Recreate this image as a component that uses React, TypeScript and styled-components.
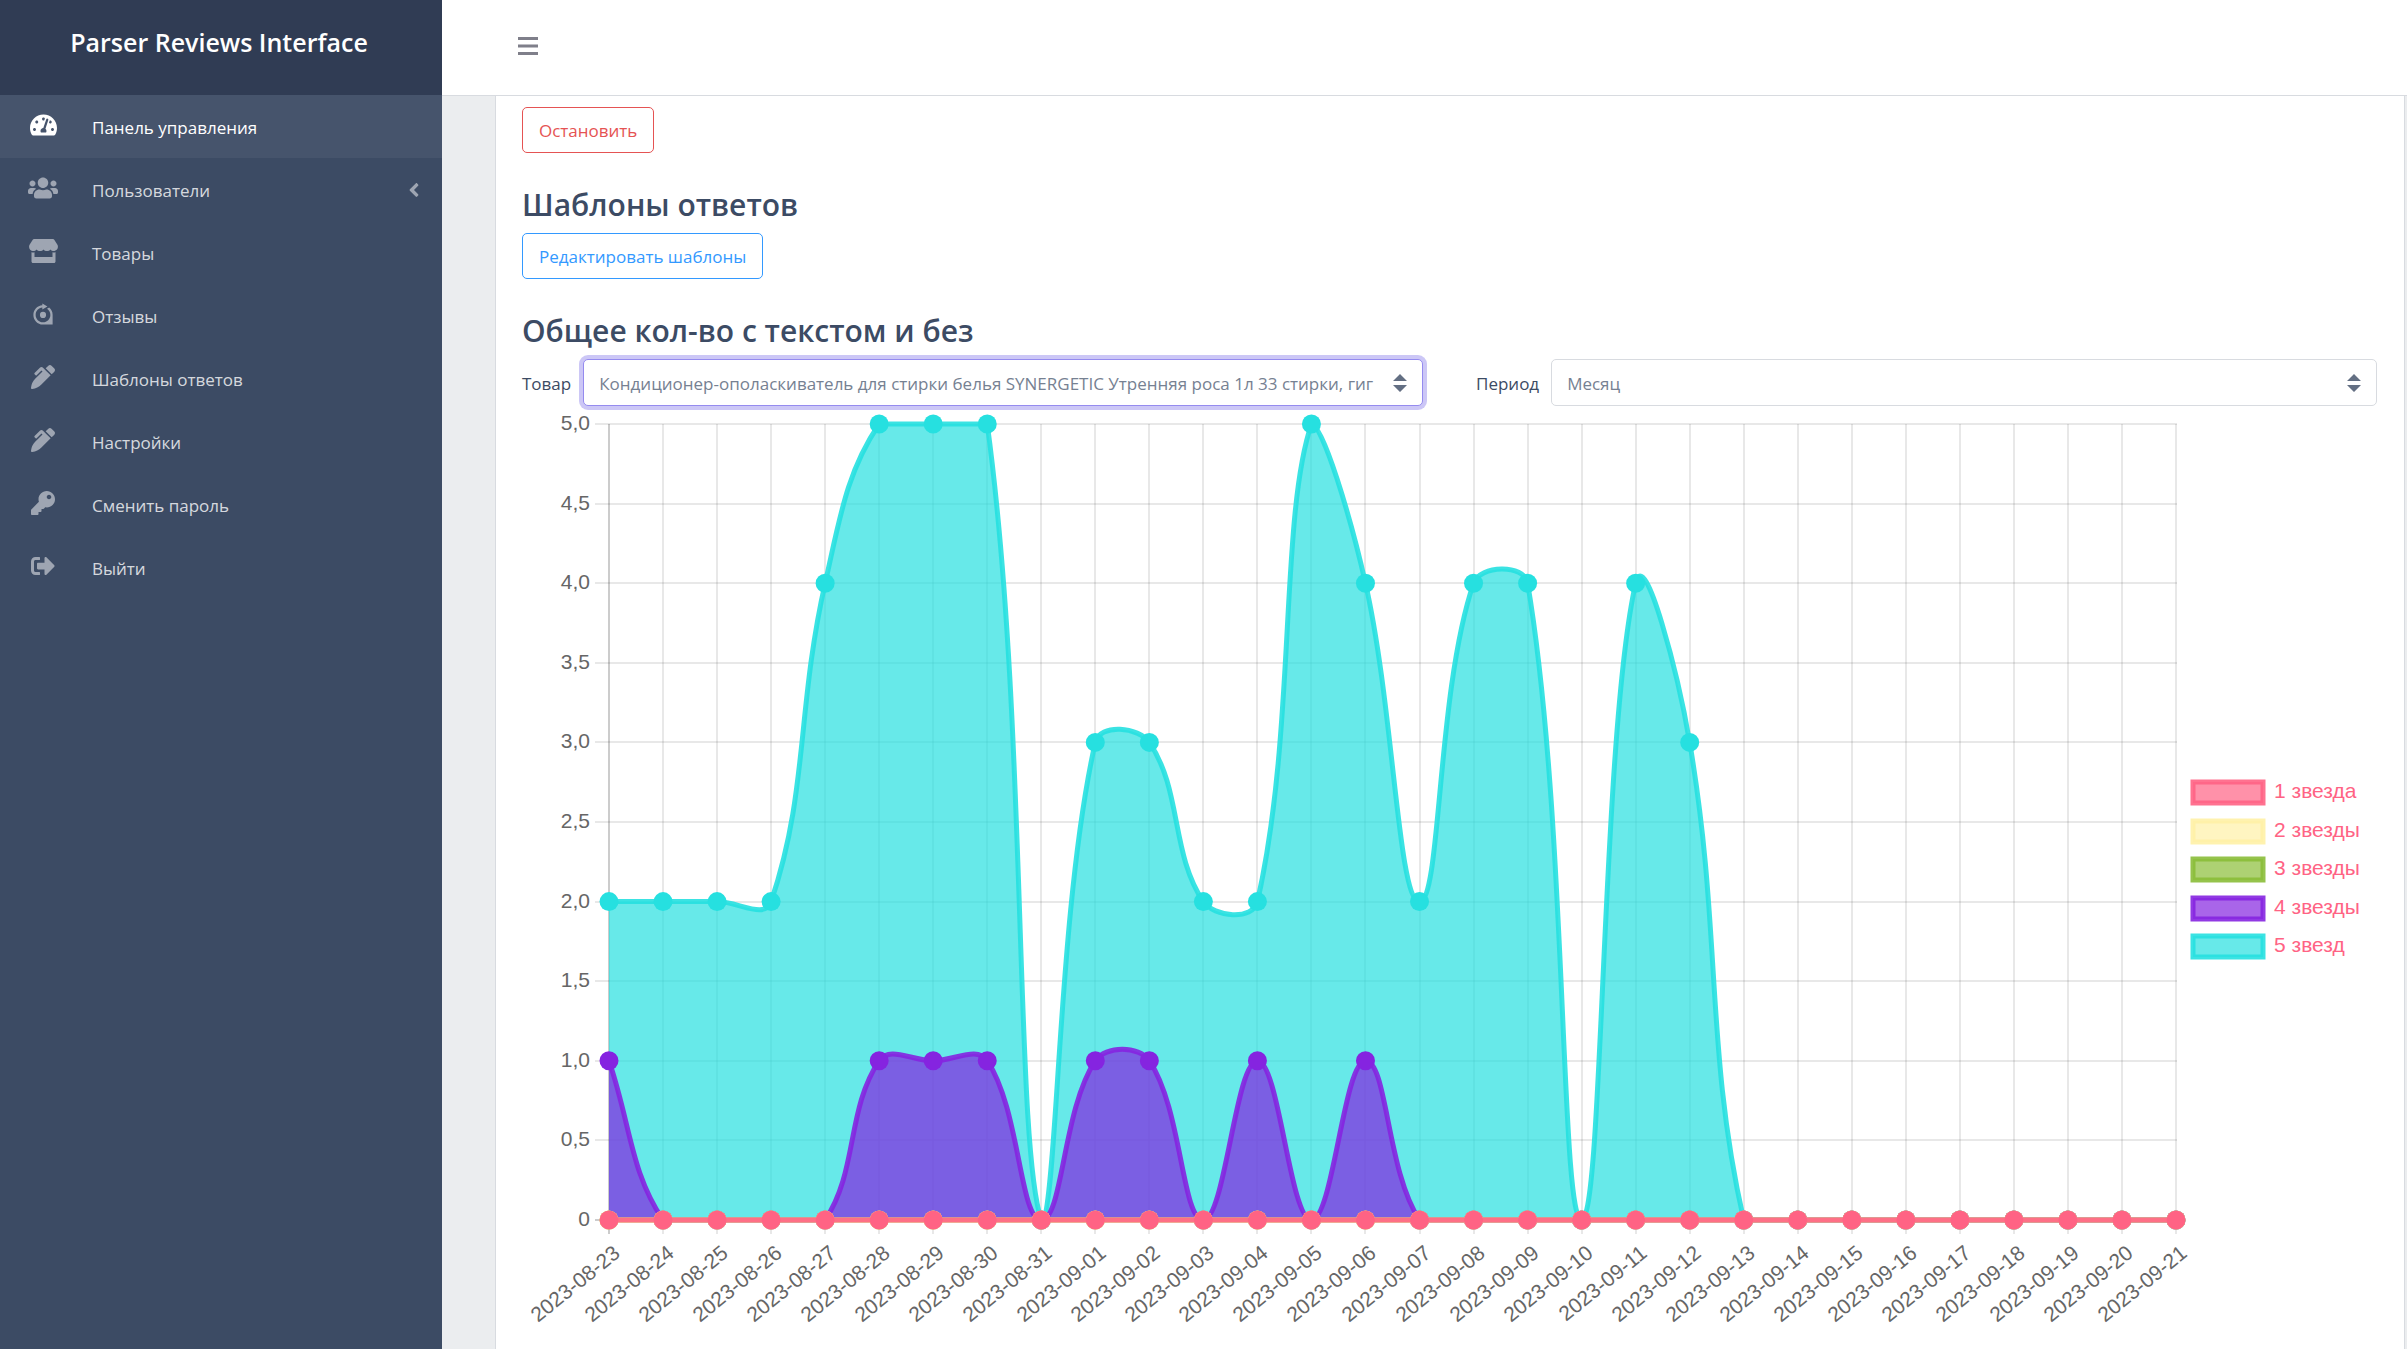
import React from "react";
import styled, { createGlobalStyle } from "styled-components";
import {
  FaAngleLeft,
  FaKey,
  FaPenAlt,
  FaRev,
  FaSignOutAlt,
  FaStore,
  FaTachometerAlt,
  FaUsers,
} from "react-icons/fa";
import type { IconType } from "react-icons";

const GlobalStyle = createGlobalStyle`
  *, *::before, *::after { box-sizing: border-box; }
  body {
    margin: 0;
    font-family: "Open Sans", "Noto Sans", sans-serif;
    font-size: 17px;
    line-height: 24px;
    color: #3c4b64;
    background: #ebedef;
  }
`;

const Layout = styled.div`
  display: flex;
  min-height: 100vh;
`;

const Sidebar = styled.aside`
  flex: 0 0 442px;
  background: #3c4b64;
`;

const Brand = styled.div`
  display: flex;
  align-items: center;
  justify-content: center;
  height: 95px;
  padding: 0 4px 12px 0;
  background: #303c54;
  color: #fff;
  font-size: 25px;
  font-weight: 600;
`;

const NavList = styled.ul`
  margin: 0;
  padding: 0;
  list-style: none;
`;

const NavLink = styled.a<{ $active?: boolean }>`
  display: flex;
  align-items: center;
  gap: 6px;
  height: 63px;
  padding: 2px 17px 0 0;
  text-decoration: none;
  color: ${(p) => (p.$active ? "#fff" : "rgba(255, 255, 255, 0.8)")};
  background: ${(p) => (p.$active ? "#46546c" : "transparent")};
`;

const NavIcon = styled.span<{ $active?: boolean; $width: number }>`
  display: flex;
  justify-content: center;
  flex: 0 0 86px;
  padding-bottom: 5px;
  color: ${(p) => (p.$active ? "#fff" : "rgba(255, 255, 255, 0.5)")};

  svg {
    width: ${(p) => p.$width}px;
    height: 24px;
  }
`;

const NavChevron = styled.span`
  display: flex;
  margin-left: auto;
  padding-bottom: 2px;
  font-size: 22px;
  color: rgba(255, 255, 255, 0.5);
`;

const Main = styled.div`
  display: flex;
  flex: 1;
  flex-direction: column;
  min-width: 0;
`;

const TopBar = styled.header`
  display: flex;
  align-items: center;
  height: 96px;
  padding: 0 54px 3px;
  background: #fff;
  border-bottom: 1px solid #d8dbe0;
`;

const MenuButton = styled.button`
  display: flex;
  padding: 12px 22px;
  border: 0;
  background: none;
  color: #7f7f8a;
`;

const Content = styled.main`
  display: flex;
  flex: 1;
  padding: 0 2px 0 53px;
`;

const Card = styled.div`
  flex: 1;
  min-width: 0;
  padding: 11px 27px 0 26px;
  background: #fff;
  border: solid #d8dbe0;
  border-width: 0 1px;
`;

const OutlineButton = styled.button<{ $color: string }>`
  display: block;
  height: 46px;
  padding: 2px 16px 0;
  border: 1px solid ${(p) => p.$color};
  border-radius: 5px;
  background: transparent;
  color: ${(p) => p.$color};
  font: inherit;
`;

const Heading = styled.h3`
  margin: 34px 0 10px;
  font-size: 30px;
  font-weight: 600;
  line-height: 36px;
`;

const Filters = styled.form`
  display: grid;
  grid-template-columns: 1fr 1fr;
  gap: 53px;
`;

const Field = styled.div`
  display: flex;
  align-items: center;
  gap: 12px;
`;

const FieldLabel = styled.label`
  padding-top: 2px;
`;

const SelectBox = styled.div`
  position: relative;
  flex: 1;
  min-width: 0;
`;

const Select = styled.select`
  display: block;
  width: 100%;
  height: 47px;
  padding: 2px 34px 0 15px;
  appearance: none;
  border: 1px solid #d8dbe0;
  border-radius: 5px;
  outline: 0;
  background: #fff;
  color: #768192;
  font: inherit;

  &:focus {
    border-color: #958bef;
    box-shadow: 0 0 0 4px rgba(50, 31, 219, 0.25);
  }
`;

const SelectArrow = styled.svg`
  position: absolute;
  top: 15px;
  right: 16px;
  width: 14px;
  height: 18px;
  fill: #636f83;
  pointer-events: none;
`;

const ChartSvg = styled.svg`
  display: block;
  width: 100%;
  height: auto;
  font-family: "Liberation Sans", Arial, sans-serif;
  font-size: 21px;
`;

type NavItem = {
  label: string;
  icon: IconType;
  iconWidth: number;
  active?: boolean;
  nested?: boolean;
};

const navItems: NavItem[] = [
  { label: "Панель управления", icon: FaTachometerAlt, iconWidth: 27, active: true },
  { label: "Пользователи", icon: FaUsers, iconWidth: 30, nested: true },
  { label: "Товары", icon: FaStore, iconWidth: 29 },
  { label: "Отзывы", icon: FaRev, iconWidth: 24 },
  { label: "Шаблоны ответов", icon: FaPenAlt, iconWidth: 24 },
  { label: "Настройки", icon: FaPenAlt, iconWidth: 24 },
  { label: "Сменить пароль", icon: FaKey, iconWidth: 24 },
  { label: "Выйти", icon: FaSignOutAlt, iconWidth: 24 },
];

const dates = Array.from({ length: 30 }, (_, i) =>
  new Date(Date.UTC(2023, 7, 23 + i)).toISOString().slice(0, 10)
);

const pad = (values: number[]) => [...values, ...Array(dates.length - values.length).fill(0)];

const series = [
  { label: "1 звезда", rgb: "255, 99, 132", values: pad([]) },
  { label: "2 звезды", rgb: "255, 241, 166", values: pad([]) },
  { label: "3 звезды", rgb: "138, 189, 56", values: pad([]) },
  { label: "4 звезды", rgb: "133, 36, 224", values: pad([1, 0, 0, 0, 0, 1, 1, 1, 0, 1, 1, 0, 1, 0, 1]) },
  {
    label: "5 звезд",
    rgb: "38, 224, 224",
    values: pad([2, 2, 2, 2, 4, 5, 5, 5, 0, 3, 3, 2, 2, 5, 4, 2, 4, 4, 0, 4, 3]),
  },
];

const area = { left: 87, right: 1654, top: 18, bottom: 814 };
const xAt = (i: number) => area.left + ((area.right - area.left) * i) / (dates.length - 1);
const yAt = (v: number) => area.bottom - ((area.bottom - area.top) * v) / 5;
const clamp = (v: number, lo: number, hi: number) => Math.min(hi, Math.max(lo, v));

// Smooth curve through the points; control points stay inside the plot area.
function curve(values: number[]) {
  const pts = values.map((v, i) => ({ x: xAt(i), y: yAt(v) }));
  const controls = pts.map((p, i) => {
    const prev = pts[i - 1] ?? p;
    const next = pts[i + 1] ?? p;
    const before = Math.hypot(p.x - prev.x, p.y - prev.y);
    const after = Math.hypot(next.x - p.x, next.y - p.y);
    const a = (0.4 * before) / (before + after);
    const b = (0.4 * after) / (before + after);
    const cap = (x: number, y: number) =>
      `${clamp(x, area.left, area.right)} ${clamp(y, area.top, area.bottom)}`;
    return {
      back: cap(p.x - a * (next.x - prev.x), p.y - a * (next.y - prev.y)),
      ahead: cap(p.x + b * (next.x - prev.x), p.y + b * (next.y - prev.y)),
    };
  });
  return pts
    .map((p, i) =>
      i === 0 ? `M${p.x} ${p.y}` : `C${controls[i - 1].ahead} ${controls[i].back} ${p.x} ${p.y}`
    )
    .join("");
}

const ticks = Array.from({ length: 11 }, (_, i) => i / 2);
const tickLabel = (v: number) => (v === 0 ? "0" : v.toFixed(1).replace(".", ","));
const gridColor = (isZero: boolean) => `rgba(0, 0, 0, ${isZero ? 0.2 : 0.09})`;

function ReviewsChart() {
  return (
    <ChartSvg viewBox="0 0 1855 927" role="img" aria-label="Общее кол-во с текстом и без">
      {ticks.map((v) => (
        <g key={v}>
          <path
            d={`M73 ${Math.round(yAt(v))}H${area.right + 1}`}
            stroke={gridColor(v === 0)}
            strokeWidth={2}
          />
          <text x={68} y={Math.round(yAt(v)) + 6} textAnchor="end" fill="#666">
            {tickLabel(v)}
          </text>
        </g>
      ))}
      {dates.map((date, i) => (
        <g key={date}>
          <path
            d={`M${Math.round(xAt(i))} ${area.top}V828`}
            stroke={gridColor(i === 0)}
            strokeWidth={2}
          />
          <text
            transform={`translate(${Math.round(xAt(i)) + 8} 844) rotate(-39)`}
            y={7}
            textAnchor="end"
            fill="#666"
          >
            {date}
          </text>
        </g>
      ))}
      {[...series].reverse().map((s) => {
        const line = curve(s.values);
        return (
          <g key={s.label}>
            <path
              d={`${line}L${area.right} ${area.bottom}H${area.left}Z`}
              fill={`rgba(${s.rgb}, 0.7)`}
            />
            <path
              d={line}
              fill="none"
              stroke={`rgba(${s.rgb}, 0.9)`}
              strokeWidth={5}
              strokeLinejoin="round"
            />
            {s.values.map((v, i) => (
              <circle key={dates[i]} cx={xAt(i)} cy={yAt(v)} r={9.5} fill={`rgb(${s.rgb})`} />
            ))}
          </g>
        );
      })}
      {series.map((s, i) => {
        const top = 376 + Math.round(i * 38.5);
        return (
          <g key={s.label}>
            <rect
              x={1671}
              y={top}
              width={70}
              height={21}
              fill={`rgba(${s.rgb}, 0.7)`}
              stroke={`rgba(${s.rgb}, 0.9)`}
              strokeWidth={5}
            />
            <text x={1752} y={top + 16} fill="#ff6384">
              {s.label}
            </text>
          </g>
        );
      })}
    </ChartSvg>
  );
}

function FilterSelect(props: { id: string; label: string; value: string; autoFocus?: boolean }) {
  return (
    <Field>
      <FieldLabel htmlFor={props.id}>{props.label}</FieldLabel>
      <SelectBox>
        <Select id={props.id} autoFocus={props.autoFocus}>
          <option>{props.value}</option>
        </Select>
        <SelectArrow viewBox="0 0 14 18" aria-hidden="true">
          <path d="M7 0L0 7h14zM7 18L0 11h14z" />
        </SelectArrow>
      </SelectBox>
    </Field>
  );
}

export default function App() {
  return (
    <>
      <GlobalStyle />
      <Layout>
        <Sidebar>
          <Brand>Parser Reviews Interface</Brand>
          <nav>
            <NavList>
              {navItems.map(({ label, icon: Icon, iconWidth, active, nested }) => (
                <li key={label}>
                  <NavLink href="#" $active={active}>
                    <NavIcon $active={active} $width={iconWidth}>
                      <Icon />
                    </NavIcon>
                    {label}
                    {nested && (
                      <NavChevron>
                        <FaAngleLeft />
                      </NavChevron>
                    )}
                  </NavLink>
                </li>
              ))}
            </NavList>
          </nav>
        </Sidebar>
        <Main>
          <TopBar>
            <MenuButton type="button" aria-label="Меню">
              <svg width="20" height="18" viewBox="0 0 20 18" fill="currentColor">
                <path d="M0 0h20v3H0zM0 7.500h20v3H0zM0 15h20v3H0z" />
              </svg>
            </MenuButton>
          </TopBar>
          <Content>
            <Card>
              <OutlineButton type="button" $color="#e55353">
                Остановить
              </OutlineButton>
              <Heading>Шаблоны ответов</Heading>
              <OutlineButton type="button" $color="#3399ff">
                Редактировать шаблоны
              </OutlineButton>
              <Heading>Общее кол-во с текстом и без</Heading>
              <Filters>
                <FilterSelect
                  id="product"
                  label="Товар"
                  value="Кондиционер-ополаскиватель для стирки белья SYNERGETIC Утренняя роса 1л 33 стирки, гиг"
                  autoFocus
                />
                <FilterSelect id="period" label="Период" value="Месяц" />
              </Filters>
              <ReviewsChart />
            </Card>
          </Content>
        </Main>
      </Layout>
    </>
  );
}
